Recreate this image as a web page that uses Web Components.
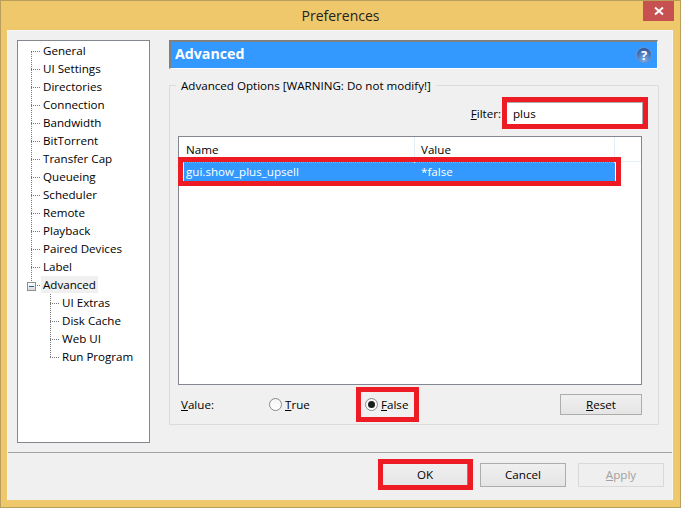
<!DOCTYPE html>
<html>
<head>
<meta charset="utf-8">
<title>Preferences</title>
<style>
html, body {
  margin: 0;
  padding: 0;
  background: #f0c86c;
}
</style>
</head>
<body>
<pref-window heading="Preferences">
  <tree-nav slot="nav">
    <tree-item first>General</tree-item>
    <tree-item>UI Settings</tree-item>
    <tree-item>Directories</tree-item>
    <tree-item>Connection</tree-item>
    <tree-item>Bandwidth</tree-item>
    <tree-item>BitTorrent</tree-item>
    <tree-item>Transfer Cap</tree-item>
    <tree-item>Queueing</tree-item>
    <tree-item>Scheduler</tree-item>
    <tree-item>Remote</tree-item>
    <tree-item>Playback</tree-item>
    <tree-item>Paired Devices</tree-item>
    <tree-item>Label</tree-item>
    <tree-item last expanded selected>Advanced</tree-item>
    <tree-item child>UI Extras</tree-item>
    <tree-item child>Disk Cache</tree-item>
    <tree-item child>Web UI</tree-item>
    <tree-item child last>Run Program</tree-item>
  </tree-nav>

  <section-header slot="panel">Advanced</section-header>
  <group-box slot="panel" label="Advanced Options [WARNING: Do not modify!]">
    <filter-field value="plus"><u>F</u>ilter:</filter-field>
    <options-table name="gui.show_plus_upsell" value="*false"></options-table>
    <value-row>
      <radio-option><u>T</u>rue</radio-option>
      <radio-option checked><u>F</u>alse</radio-option>
      <win-button slot="action" wide="82"><u>R</u>eset</win-button>
    </value-row>
  </group-box>

  <win-button slot="footer" is-default>OK</win-button>
  <win-button slot="footer">Cancel</win-button>
  <win-button slot="footer" disabled><u>A</u>pply</win-button>

  <mark-box slot="marks" x="502" y="97" w="146" h="32"></mark-box>
  <mark-box slot="marks" x="178" y="157" w="443" h="29"></mark-box>
  <mark-box slot="marks" x="356" y="387" w="63" h="35"></mark-box>
  <mark-box slot="marks" x="378" y="459" w="95" h="31"></mark-box>
</pref-window>

<script>
const ui_font = '"Open Sans", "Noto Sans", sans-serif';

const window_template = document.createElement('template');
window_template.innerHTML = `
<style>
:host {
  display: block;
  position: relative;
  box-sizing: border-box;
  width: 681px;
  height: 508px;
  border: 1px solid #b89f5c;
  background: #f0c86c;
  font: 11.6px/16px ${ui_font};
  color: #000;
}
#title {
  display: flex;
  justify-content: center;
  align-items: center;
  position: relative;
  height: 29px;
  font-size: 14px;
  color: #222;
}
#close {
  position: absolute;
  top: 0;
  right: 6px;
  width: 31px;
  height: 20px;
  display: flex;
  justify-content: center;
  align-items: center;
  background: #c75050;
}
#client {
  display: flex;
  flex-direction: column;
  height: 470px;
  margin: 0 7px 0 6px;
  box-sizing: border-box;
  border: 1px solid #f6f6f6;
  border-bottom: 0;
  background: #f0f0f0;
}
#main {
  display: flex;
  gap: 19px;
  height: 421px;
  box-sizing: border-box;
  padding: 9px 13px 0 9px;
}
#panel {
  display: flex;
  flex-direction: column;
  width: 490px;
}
#footer {
  display: flex;
  justify-content: flex-end;
  gap: 12px;
  height: 48px;
  box-sizing: border-box;
  border-top: 1px solid #a0a0a0;
  padding: 10px 8px 0 0;
}
</style>
<div id="title">
  <span id="heading"></span>
  <div id="close">
    <svg width="10" height="10" viewBox="0 0 10 10"><path d="M1 1.5 L9 8.5 M9 1.5 L1 8.5" stroke="#fff" stroke-width="2" fill="none"/></svg>
  </div>
</div>
<div id="client">
  <div id="main">
    <slot name="nav"></slot>
    <div id="panel"><slot name="panel"></slot></div>
  </div>
  <div id="footer"><slot name="footer"></slot></div>
</div>
<slot name="marks"></slot>
`;
class PrefWindow extends HTMLElement {
  constructor() {
    super();
    this.attachShadow({ mode: 'open' });
    this.shadowRoot.appendChild(window_template.content.cloneNode(true));
    this.shadowRoot.querySelector('#heading').textContent = this.getAttribute('heading');
  }
}
customElements.define('pref-window', PrefWindow);

const tree_template = document.createElement('template');
tree_template.innerHTML = `
<style>
:host {
  display: block;
  box-sizing: border-box;
  width: 133px;
  height: 403px;
  border: 1px solid #828790;
  background: #fff;
  padding: 1px 0 0 13px;
}
</style>
<slot></slot>
`;
class TreeNav extends HTMLElement {
  constructor() {
    super();
    this.attachShadow({ mode: 'open' });
    this.shadowRoot.appendChild(tree_template.content.cloneNode(true));
  }
}
customElements.define('tree-nav', TreeNav);

const item_template = document.createElement('template');
item_template.innerHTML = `
<style>
:host {
  display: flex;
  height: 18px;
  line-height: 18px;
  white-space: nowrap;
}
:host([child]) {
  padding-left: 19px;
}
#guide {
  position: relative;
  flex: 0 0 10px;
  height: 18px;
  background:
    repeating-linear-gradient(to bottom, #777 0 1px, transparent 1px 2px) left top / 1px 100% no-repeat,
    repeating-linear-gradient(to right, #777 0 1px, transparent 1px 2px) left 9px / 100% 1px no-repeat;
}
:host([last]) #guide {
  background:
    repeating-linear-gradient(to bottom, #777 0 1px, transparent 1px 2px) left top / 1px 10px no-repeat,
    repeating-linear-gradient(to right, #777 0 1px, transparent 1px 2px) left 9px / 100% 1px no-repeat;
}
:host([first]) #guide {
  background:
    repeating-linear-gradient(to bottom, #777 0 1px, transparent 1px 2px) left 10px / 1px 8px no-repeat,
    repeating-linear-gradient(to right, #777 0 1px, transparent 1px 2px) left 9px / 100% 1px no-repeat;
}
#toggle {
  display: none;
  position: absolute;
  left: -4px;
  top: 6px;
  box-sizing: border-box;
  width: 9px;
  height: 9px;
  border: 1px solid #8e8f8f;
  background: linear-gradient(#fff, #d8d8d8);
}
#toggle::after {
  content: "";
  position: absolute;
  left: 1px;
  top: 3px;
  width: 5px;
  height: 1px;
  background: #2f5faa;
}
:host([expanded]) #toggle {
  display: block;
}
#label {
  padding: 0 2px;
  height: 17px;
}
:host([selected]) #label {
  background: #f0f0f0;
}
</style>
<div id="guide"><div id="toggle"></div></div>
<div id="label"><slot></slot></div>
`;
class TreeItem extends HTMLElement {
  constructor() {
    super();
    this.attachShadow({ mode: 'open' });
    this.shadowRoot.appendChild(item_template.content.cloneNode(true));
  }
}
customElements.define('tree-item', TreeItem);

const header_template = document.createElement('template');
header_template.innerHTML = `
<style>
:host {
  display: flex;
  align-items: center;
  justify-content: space-between;
  box-sizing: border-box;
  width: 489px;
  height: 29px;
  border-style: solid;
  border-width: 2px 1px 1px 2px;
  border-color: #808080 #fff #fff #808080;
  padding: 0 4px 0 4px;
  background: #3399ff;
  color: #fff;
  font-size: 14.2px;
  font-weight: bold;
}
#text {
  margin-bottom: 2px;
}
</style>
<span id="text"><slot></slot></span>
<svg width="18" height="18" viewBox="0 0 18 18">
  <defs>
    <radialGradient id="orb" cx="50%" cy="85%" r="80%">
      <stop offset="0" stop-color="#7fb0ea"/>
      <stop offset="1" stop-color="#2a56a0"/>
    </radialGradient>
  </defs>
  <circle cx="9" cy="9" r="7.5" fill="url(#orb)" stroke="#6f93c8"/>
  <text x="9" y="13.5" text-anchor="middle" font-size="13" font-weight="bold" fill="#fff" font-family="Open Sans">?</text>
</svg>
`;
class SectionHeader extends HTMLElement {
  constructor() {
    super();
    this.attachShadow({ mode: 'open' });
    this.shadowRoot.appendChild(header_template.content.cloneNode(true));
  }
}
customElements.define('section-header', SectionHeader);

const group_template = document.createElement('template');
group_template.innerHTML = `
<style>
:host {
  display: block;
  margin-top: 7px;
}
fieldset {
  box-sizing: border-box;
  height: 349px;
  margin: 0;
  padding: 0 16px 0 8px;
  border: 1px solid #dcdcdc;
}
legend {
  margin-left: -2px;
  padding: 2px 5px 0;
  line-height: 16px;
}
</style>
<fieldset>
  <legend></legend>
  <slot></slot>
</fieldset>
`;
class GroupBox extends HTMLElement {
  constructor() {
    super();
    this.attachShadow({ mode: 'open' });
    this.shadowRoot.appendChild(group_template.content.cloneNode(true));
    this.shadowRoot.querySelector('legend').textContent = this.getAttribute('label');
  }
}
customElements.define('group-box', GroupBox);

const filter_template = document.createElement('template');
filter_template.innerHTML = `
<style>
:host {
  display: flex;
  justify-content: flex-end;
  align-items: center;
  gap: 4px;
  margin: 8px -1px 0 0;
  height: 23px;
}
#input {
  box-sizing: border-box;
  width: 138px;
  height: 23px;
  border: 1px solid #ababab;
  background: #fff;
  padding-left: 7px;
  line-height: 21px;
}
</style>
<span><slot></slot></span>
<div id="input"></div>
`;
class FilterField extends HTMLElement {
  constructor() {
    super();
    this.attachShadow({ mode: 'open' });
    this.shadowRoot.appendChild(filter_template.content.cloneNode(true));
    this.shadowRoot.querySelector('#input').textContent = this.getAttribute('value');
  }
}
customElements.define('filter-field', FilterField);

const table_template = document.createElement('template');
table_template.innerHTML = `
<style>
:host {
  display: block;
  box-sizing: border-box;
  height: 249px;
  margin-top: 11px;
  border: 1px solid #828790;
  background: #fff;
}
#head {
  display: grid;
  grid-template-columns: 236px 200px 1fr;
  height: 25px;
  box-sizing: border-box;
  border-bottom: 1px solid #e5eef7;
  line-height: 26px;
}
#head span {
  box-sizing: border-box;
  padding-left: 7px;
  border-right: 1px solid #e5eef7;
}
#head span:last-child {
  border-right: 0;
}
#head span:nth-child(2) {
  padding-left: 6px;
}
#row {
  display: grid;
  grid-template-columns: 232px 1fr;
  box-sizing: border-box;
  width: 433px;
  height: 20px;
  margin-left: 4px;
  background: #3399ff;
  color: #fff;
  line-height: 18px;
  border-left: 1px solid #fff;
  border-right: 1px solid #fff;
  border-top: 1px dotted #d9a066;
  border-bottom: 1px dotted #d9a066;
}
#row span:first-child {
  padding-left: 2px;
}
#row span:last-child {
  padding-left: 5px;
}
</style>
<div id="head"><span>Name</span><span>Value</span><span></span></div>
<div id="row"><span id="name"></span><span id="value"></span></div>
`;
class OptionsTable extends HTMLElement {
  constructor() {
    super();
    this.attachShadow({ mode: 'open' });
    this.shadowRoot.appendChild(table_template.content.cloneNode(true));
    this.shadowRoot.querySelector('#name').textContent = this.getAttribute('name');
    this.shadowRoot.querySelector('#value').textContent = this.getAttribute('value');
  }
}
customElements.define('options-table', OptionsTable);

const value_template = document.createElement('template');
value_template.innerHTML = `
<style>
:host {
  display: flex;
  align-items: center;
  height: 21px;
  margin-top: 9px;
}
#label {
  box-sizing: border-box;
  width: 91px;
  padding-left: 3px;
  padding-top: 1px;
}
#spacer {
  flex: 1;
}
</style>
<span id="label"><u>V</u>alue:</span>
<slot></slot>
<div id="spacer"></div>
<slot name="action"></slot>
`;
class ValueRow extends HTMLElement {
  constructor() {
    super();
    this.attachShadow({ mode: 'open' });
    this.shadowRoot.appendChild(value_template.content.cloneNode(true));
  }
}
customElements.define('value-row', ValueRow);

const radio_template = document.createElement('template');
radio_template.innerHTML = `
<style>
:host {
  display: flex;
  align-items: center;
  gap: 3px;
  width: 96px;
}
#dot {
  display: flex;
  justify-content: center;
  align-items: center;
  box-sizing: border-box;
  width: 13px;
  height: 13px;
  border: 1px solid #8a8a8a;
  border-radius: 50%;
  background: linear-gradient(#f4f4f4, #fff);
}
:host([checked]) #dot::after {
  content: "";
  width: 7px;
  height: 7px;
  border-radius: 50%;
  background: #1c1c1c;
}
span {
  padding-top: 1px;
}
</style>
<div id="dot"></div>
<span><slot></slot></span>
`;
class RadioOption extends HTMLElement {
  constructor() {
    super();
    this.attachShadow({ mode: 'open' });
    this.shadowRoot.appendChild(radio_template.content.cloneNode(true));
  }
}
customElements.define('radio-option', RadioOption);

const button_template = document.createElement('template');
button_template.innerHTML = `
<style>
:host {
  display: flex;
  justify-content: center;
  align-items: center;
  box-sizing: border-box;
  width: 86px;
  height: 24px;
  border: 1px solid #adadad;
  background: linear-gradient(#f0f0f0, #e5e5e5);
}
:host([is-default]) {
  border-color: #3399ff;
}
:host([disabled]) {
  border-color: #d9d9d9;
  background: #efefef;
  color: #a0a0a0;
}
:host([wide]) {
  width: 82px;
  height: 21px;
}
</style>
<slot></slot>
`;
class WinButton extends HTMLElement {
  constructor() {
    super();
    this.attachShadow({ mode: 'open' });
    this.shadowRoot.appendChild(button_template.content.cloneNode(true));
  }
}
customElements.define('win-button', WinButton);

// red rectangles drawn over the screenshot
const mark_template = document.createElement('template');
mark_template.innerHTML = `
<style>
:host {
  display: block;
  position: absolute;
  box-sizing: border-box;
  border: 5px solid #ed1c24;
}
</style>
`;
class MarkBox extends HTMLElement {
  constructor() {
    super();
    this.attachShadow({ mode: 'open' });
    this.shadowRoot.appendChild(mark_template.content.cloneNode(true));
    // the window's 1px border is the containing block's edge
    this.style.left = (this.getAttribute('x') - 1) + 'px';
    this.style.top = (this.getAttribute('y') - 1) + 'px';
    this.style.width = this.getAttribute('w') + 'px';
    this.style.height = this.getAttribute('h') + 'px';
  }
}
customElements.define('mark-box', MarkBox);
</script>
</body>
</html>
